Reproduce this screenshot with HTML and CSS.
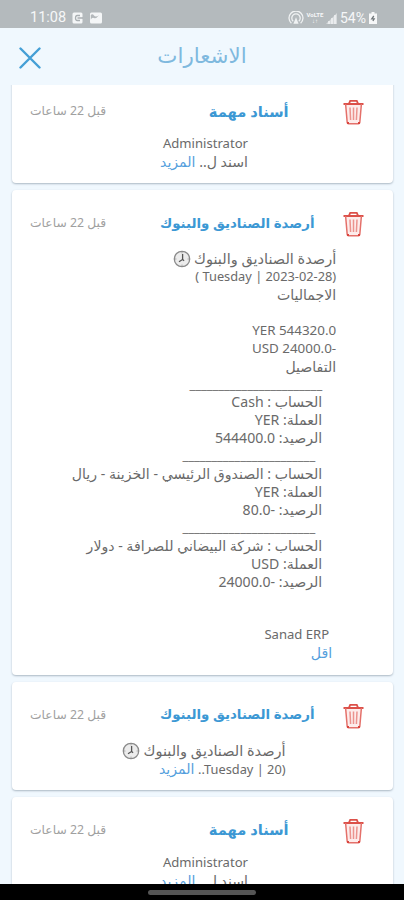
FILE: index.html
```
<!DOCTYPE html>
<html lang="ar">
<head>
    <meta charset="UTF-8">
    <meta name="viewport" content="width=device-width, initial-scale=1.0">
    <title>الاشعارات</title>
    <link rel="stylesheet" href="styles.css">
</head>
<body>
    <svg class="defs" width="0" height="0">
        <symbol id="trash" viewBox="0 0 21 26">
            <path d="M3 6h15l-1.4 18H4.4z" fill="#fdeceb"/>
            <path d="M0.5 5h20M6 4.6L7.2 1.8h6.6L15 4.6" fill="none" stroke="#dc5049" stroke-width="1.8"/>
            <path d="M2.6 5l1.6 18.5q.1 1.3 1.4 1.3h9.8q1.3 0 1.4-1.3L18.4 5" fill="none" stroke="#e4706a" stroke-width="1.5"/>
            <path d="M7 8.5l.6 12.5M10.5 8.5V21M14 8.5L13.4 21" fill="none" stroke="#eb938e" stroke-width="1.5"/>
            <path d="M4 23h2v2H4zM15 23h2v2h-2z" fill="#d9443d"/>
        </symbol>
        <symbol id="clock" viewBox="0 0 18 18">
            <circle cx="9" cy="9" r="7.7" fill="#ececec" stroke="#8b8b8b" stroke-width="1.3"/>
            <path d="M9.6 4v5.5L6 11.8M9.6 9.5l1.5 1.2" fill="none" stroke="#555" stroke-width="1.3"/>
            <path d="M9 2.3v1M9 14.7v1M2.3 9h1M14.7 9h1" stroke="#888" stroke-width="1"/>
        </symbol>
    </svg>

    <div class="status-bar">
        <div class="status-left">
            <span class="status-time">11:08</span>
            <svg width="12" height="12" viewBox="0 0 12 12">
                <rect x="0.5" y="0.5" width="10" height="11" rx="1.5" fill="#f4f6f7"/>
                <path d="M8 3.5H5.2Q3.5 3.5 3.5 6t1.7 2.5H8M5.5 6H11" fill="none" stroke="#a9afb2" stroke-width="1.3"/>
            </svg>
            <svg width="12" height="12" viewBox="0 0 12 12">
                <rect y="0.5" width="12" height="11" rx="1.5" fill="#f4f6f7"/>
                <path d="M0.8 7.5V3Q2.5 1.5 4 3.5T9 3.2Q6 7 4 6T0.8 7.5z" fill="#b3b8bb"/>
            </svg>
        </div>
        <div class="status-right">
            <svg width="16" height="14" viewBox="0 0 16 14">
                <path d="M3.4 12.3A7 7 0 1 1 12.6 12.3M5.2 10.2A4.2 4.2 0 1 1 10.8 10.2" fill="none" stroke="#f0f2f3" stroke-width="1.3"/>
                <path d="M8 6.3l2.6 6.4H5.4z" fill="#f0f2f3"/>
            </svg>
            <span class="network"><b>VoLTE</b><i>↓↑</i></span>
            <svg class="signal" width="11" height="11" viewBox="0 0 11 11">
                <path d="M0 11L11 0v11z" fill="#d6dadc"/>
                <path d="M3 11V8M6 11V5M9 11V2" stroke="#f2f4f5" stroke-width="1.4"/>
            </svg>
            <span class="battery">54%</span>
            <svg width="8" height="12" viewBox="0 0 8 12">
                <path d="M2.5 0h3v1.5H8V12H0V1.5h2.5z" fill="#f6f7f8"/>
                <path d="M4.8 4L2.8 6.8h2.4L3.9 9" fill="none" stroke="#70777a" stroke-width="1.3"/>
            </svg>
        </div>
    </div>

    <header class="header">
        <svg class="close" width="22" height="22" viewBox="0 0 22 22">
            <path d="M1.5 1.5l19 19M20.5 1.5l-19 19" stroke="#449fd6" stroke-width="2.4" stroke-linecap="round"/>
        </svg>
        <h1 dir="rtl">الاشعارات</h1>
    </header>

    <main class="list" dir="rtl">
        <article class="card">
            <div class="card-head">
                <svg class="trash"><use href="#trash"/></svg>
                <h2>أسناد مهمة</h2>
                <span class="time">قبل 22 ساعات</span>
            </div>
            <div class="card-body">
                <p class="latin">Administrator</p>
                <p>اسند ل.. <a>المزيد</a></p>
            </div>
        </article>

        <article class="card">
            <div class="card-head">
                <svg class="trash"><use href="#trash"/></svg>
                <h2 class="long">أرصدة الصناديق والبنوك</h2>
                <span class="time">قبل 22 ساعات</span>
            </div>
            <div class="card-body">
                <p class="with-clock">أرصدة الصناديق والبنوك <svg class="clock"><use href="#clock"/></svg></p>
                <p class="latin date" dir="ltr">( Tuesday | 2023-02-28)</p>
                <p>الاجماليات</p>
                <p class="blank"></p>
                <p class="latin amount" dir="ltr">YER 544320.0</p>
                <p class="latin amount" dir="ltr">USD 24000.0-</p>
                <p>التفاصيل</p>
                <div class="details">
                    <p class="rule">_______________________</p>
                    <p>الحساب : Cash</p>
                    <p>العملة: YER</p>
                    <p>الرصيد: 544400.0</p>
                    <p class="rule inset">_______________________</p>
                    <p>الحساب : الصندوق الرئيسي - الخزينة - ريال</p>
                    <p>العملة: YER</p>
                    <p>الرصيد: -80.0</p>
                    <p class="rule inset">_______________________</p>
                    <p>الحساب : شركة البيضاني للصرافة - دولار</p>
                    <p>العملة: USD</p>
                    <p>الرصيد: -24000.0</p>
                </div>
                <p class="blank"></p>
                <p class="blank"></p>
                <p class="latin sender">Sanad ERP</p>
                <p class="less"><a>اقل</a></p>
            </div>
        </article>

        <article class="card">
            <div class="card-head">
                <svg class="trash"><use href="#trash"/></svg>
                <h2 class="long">أرصدة الصناديق والبنوك</h2>
                <span class="time">قبل 22 ساعات</span>
            </div>
            <div class="card-body">
                <p class="with-clock">أرصدة الصناديق والبنوك <svg class="clock"><use href="#clock"/></svg></p>
                <p><span class="latin date" dir="ltr">..Tuesday | 20)</span> <a>المزيد</a></p>
            </div>
        </article>

        <article class="card">
            <div class="card-head">
                <svg class="trash"><use href="#trash"/></svg>
                <h2>أسناد مهمة</h2>
                <span class="time">قبل 22 ساعات</span>
            </div>
            <div class="card-body">
                <p class="latin">Administrator</p>
                <p>اسند ل.. <a>المزيد</a></p>
            </div>
        </article>
    </main>

    <footer class="nav-bar"><span></span></footer>
</body>
</html>
```
FILE: styles.css
```
* {
    box-sizing: border-box;
}
body {
    margin: 0;
    height: 900px;
    display: flex;
    flex-direction: column;
    overflow: hidden;
    background-color: #f0f8fe;
    font-family: "Noto Sans", "DejaVu Sans", sans-serif;
    color: #6a6a6a;
}
h1, h2, p {
    margin: 0;
}
.defs {
    position: absolute;
}
.status-bar {
    height: 28px;
    flex: none;
    display: flex;
    justify-content: space-between;
    padding: 8px 27px 0 30px;
    background-color: #b4babd;
    color: #f6f7f8;
    font: 14.5px/20px Roboto, sans-serif;
}
.status-left, .status-right {
    display: flex;
    align-items: center;
    height: 20px;
}
.status-left {
    gap: 6px;
}
.status-right {
    gap: 3px;
}
.network {
    display: flex;
    flex-direction: column;
    align-items: center;
    width: 16px;
    font-size: 6px;
    line-height: 6px;
}
.network i {
    font-style: normal;
}
.battery {
    font-size: 14px;
}
.header {
    height: 57px;
    flex: none;
    display: grid;
    grid-template-columns: 60px 1fr 60px;
    align-items: center;
}
.close {
    margin-left: 19px;
    margin-top: 2px;
}
.header h1 {
    color: #7fb9de;
    font-size: 21.4px;
    line-height: 30px;
    font-weight: normal;
    text-align: center;
    margin-bottom: 3px;
}
.list {
    flex: 1;
    min-height: 0;
    overflow: hidden;
    padding: 0 11px 0 12px;
}
.card {
    margin-bottom: 6.7px;
    padding-bottom: 12.5px;
    background-color: #fff;
    border-radius: 4px;
    box-shadow: 0 1px 2px rgba(70, 90, 110, 0.4);
}
.card:first-child {
    margin-top: -7px;
}
.card-head {
    height: 57px;
    display: flex;
    align-items: center;
    padding: 8px 29px 0 18px;
}
.card-head h2 {
    flex: 1;
    display: flex;
    color: #3c98d4;
    font-size: 14.7px;
    line-height: 24px;
    white-space: nowrap;
}
.card-head .long {
    font-size: 13.4px;
}
/* the title sits a little closer to the bin than to the time */
.card-head h2::before {
    content: "";
    flex: 9;
}
.card-head h2::after {
    content: "";
    flex: 17;
}
.trash {
    width: 21px;
    height: 26px;
    margin-top: 3px;
}
.time {
    color: #a0a0a0;
    font-size: 12.3px;
    white-space: nowrap;
}
.card-body {
    width: fit-content;
    margin: 0 auto;
    padding-left: 3px;
    font-size: 14.1px;
}
.card-body p {
    height: 17.93px;
    line-height: 17.93px;
    text-align: right;
    white-space: nowrap;
}
.card-body .latin {
    font-size: 13.1px;
}
.card-body .date {
    font-size: 12.8px;
}
.card-body .amount {
    font-size: 13.4px;
}
.card-body .with-clock {
    display: flex;
    align-items: center;
    gap: 3px;
    height: 21px;
    padding-top: 3px;
    font-size: 14.5px;
}
.clock {
    width: 18px;
    height: 18px;
}
.card-body a {
    color: #559fdd;
}
.details {
    padding-right: 14px;
}
.card-body .rule {
    font-size: 13px;
}
.details .inset {
    padding-right: 7px;
}
.card-body .sender {
    padding-right: 7px;
}
.card-body .less {
    padding-right: 4px;
}
.nav-bar {
    height: 16px;
    flex: none;
    display: flex;
    justify-content: center;
    align-items: center;
    background-color: #000;
}
.nav-bar span {
    width: 108px;
    height: 5px;
    border-radius: 3px;
    background-color: #555;
}
```
